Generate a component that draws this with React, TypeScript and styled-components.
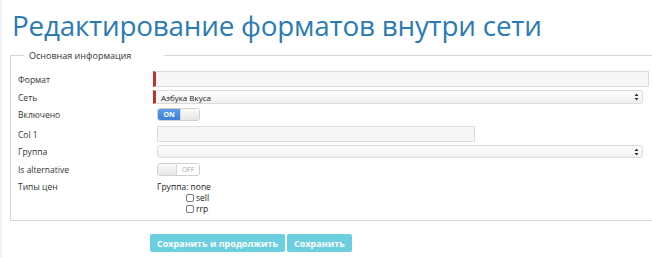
import React from "react";
import styled, { createGlobalStyle } from "styled-components";

const Global = createGlobalStyle`
  html, body { margin: 0; padding: 0; background: #fff; }
  body { font-family: "Open Sans", "Noto Sans", sans-serif; color: #333; overflow: hidden; }
`;

const Page = styled.div`
  width: 652px;
  height: 258px;
  box-sizing: border-box;
  padding: 0 0 0 8px;
  overflow: hidden;
  border-left: 2px solid #f4f4f4;
`;

const Title = styled.h1`
  margin: 0;
  padding: 7px 0 0 2px;
  height: 49px;
  box-sizing: border-box;
  font-family: "Open Sans", "Noto Sans", sans-serif;
  font-weight: 400;
  font-size: 27.8px;
  letter-spacing: -0.2px;
  line-height: 36px;
  color: #2a7bb5;
  white-space: nowrap;
`;

const Fieldset = styled.fieldset`
  margin: 0;
  padding: 5px 0 4px 7px;
  width: 680px;
  height: 172px;
  box-sizing: border-box;
  border: 1px solid #d6d6d6;
  border-right: none;
  min-inline-size: 0;
`;

const Legend = styled.legend`
  margin-left: 6px;
  width: 140px;
  box-sizing: border-box;
  padding: 0 0 0 5px;
  font-size: 9px;
  color: #333;
`;

const Row = styled.div<{ $h: number; $mt: number }>`
  display: grid;
  grid-template-columns: 135px 1fr;
  align-items: center;
  height: ${(p) => p.$h}px;
  margin-top: ${(p) => p.$mt}px;
`;

const TopRow = styled(Row)`
  align-items: start;
`;

const Label = styled.div`
  font-size: 8.5px;
  color: #333;
`;

const Field = styled.div<{ $w: number; $h: number; $required?: boolean }>`
  position: relative;
  width: ${(p) => p.$w}px;
  height: ${(p) => p.$h}px;
  box-sizing: border-box;
  margin-left: ${(p) => (p.$required ? 0 : 4)}px;
  background: #f6f6f6;
  border: 1px solid #dcdcdc;
  border-left: ${(p) => (p.$required ? "3px solid #c0322b" : "1px solid #dcdcdc")};
  display: flex;
  align-items: center;
  padding-left: 5px;
  font-size: 8px;
  color: #222;
`;

const SelectField = styled(Field)`
  background: linear-gradient(#fdfdfd, #f1f1f1);
  border-radius: ${(p) => (p.$required ? "0 3px 3px 0" : "3px")};
`;

const Arrows = styled.svg`
  position: absolute;
  right: 3px;
  top: 50%;
  transform: translateY(-50%);
`;

const Toggle = styled.div`
  display: flex;
  width: 43px;
  height: 13px;
  margin-left: 4px;
  border: 1px solid #cfcfcf;
  border-radius: 3px;
  overflow: hidden;
  box-sizing: border-box;
`;

const ToggleOn = styled.div`
  width: 24px;
  background: linear-gradient(#5a9de8, #3f7fd6);
  color: #fff;
  font-size: 7px;
  font-weight: 700;
  display: flex;
  align-items: center;
  justify-content: center;
`;

const Knob = styled.div<{ $w: number }>`
  width: ${(p) => p.$w}px;
  background: linear-gradient(#fafafa, #e6e6e6);
  border-left: 1px solid #d8d8d8;
  &:first-child { border-left: none; border-right: 1px solid #d8d8d8; }
`;

const ToggleOff = styled.div`
  flex: 1;
  background: #fff;
  color: #aaa;
  font-size: 7px;
  display: flex;
  align-items: center;
  justify-content: center;
`;

const Prices = styled.div`
  margin-left: 4px;
  font-size: 8.5px;
  line-height: 11px;
  color: #222;
`;

const CheckRow = styled.label`
  display: flex;
  align-items: center;
  gap: 2px;
  margin-left: 29px;
  font-size: 8.5px;
  line-height: 11px;
`;

const Box = styled.span`
  width: 8px;
  height: 8px;
  box-sizing: border-box;
  border: 1px solid #777;
  border-radius: 2px;
  background: #fff;
`;

const Actions = styled.div`
  display: flex;
  gap: 2px;
  margin: 13px 0 0 140px;
`;

const Button = styled.button`
  height: 18px;
  padding: 0 7px;
  border: none;
  border-radius: 2px;
  background: #6ccfe0;
  color: #fff;
  font-family: "Open Sans", "Noto Sans", sans-serif;
  font-weight: 700;
  font-size: 9px;
  cursor: pointer;
`;

const SelectArrows = () => (
  <Arrows width="5" height="8" viewBox="0 0 5 8">
    <path d="M2.5 0.5 L4.5 3 L0.5 3 Z M2.5 7.5 L4.5 5 L0.5 5 Z" fill="#333" />
  </Arrows>
);

export default function App() {
  return (
    <Page>
      <Global />
      <Title>Редактирование форматов внутри сети</Title>
      <Fieldset>
        <Legend>Основная информация</Legend>
        <Row $h={16} $mt={4}>
          <Label>Формат</Label>
          <Field $w={496} $h={16} $required />
        </Row>
        <Row $h={14} $mt={3}>
          <Label>Сеть</Label>
          <SelectField $w={490} $h={14} $required>
            Азбука Вкуса
            <SelectArrows />
          </SelectField>
        </Row>
        <Row $h={13} $mt={4}>
          <Label>Включено</Label>
          <Toggle>
            <ToggleOn>ON</ToggleOn>
            <Knob $w={19} />
          </Toggle>
        </Row>
        <Row $h={16} $mt={5}>
          <Label>Col 1</Label>
          <Field $w={318} $h={16} />
        </Row>
        <Row $h={13} $mt={3}>
          <Label>Группа</Label>
          <SelectField $w={486} $h={13}>
            <SelectArrows />
          </SelectField>
        </Row>
        <Row $h={13} $mt={5}>
          <Label>Is alternative</Label>
          <Toggle>
            <Knob $w={18} />
            <ToggleOff>OFF</ToggleOff>
          </Toggle>
        </Row>
        <TopRow $h={34} $mt={5}>
          <Label>Типы цен</Label>
          <Prices>
            Группа: none
            <CheckRow>
              <Box />
              sell
            </CheckRow>
            <CheckRow>
              <Box />
              rrp
            </CheckRow>
          </Prices>
        </TopRow>
      </Fieldset>
      <Actions>
        <Button>Сохранить и продолжить</Button>
        <Button>Сохранить</Button>
      </Actions>
    </Page>
  );
}
